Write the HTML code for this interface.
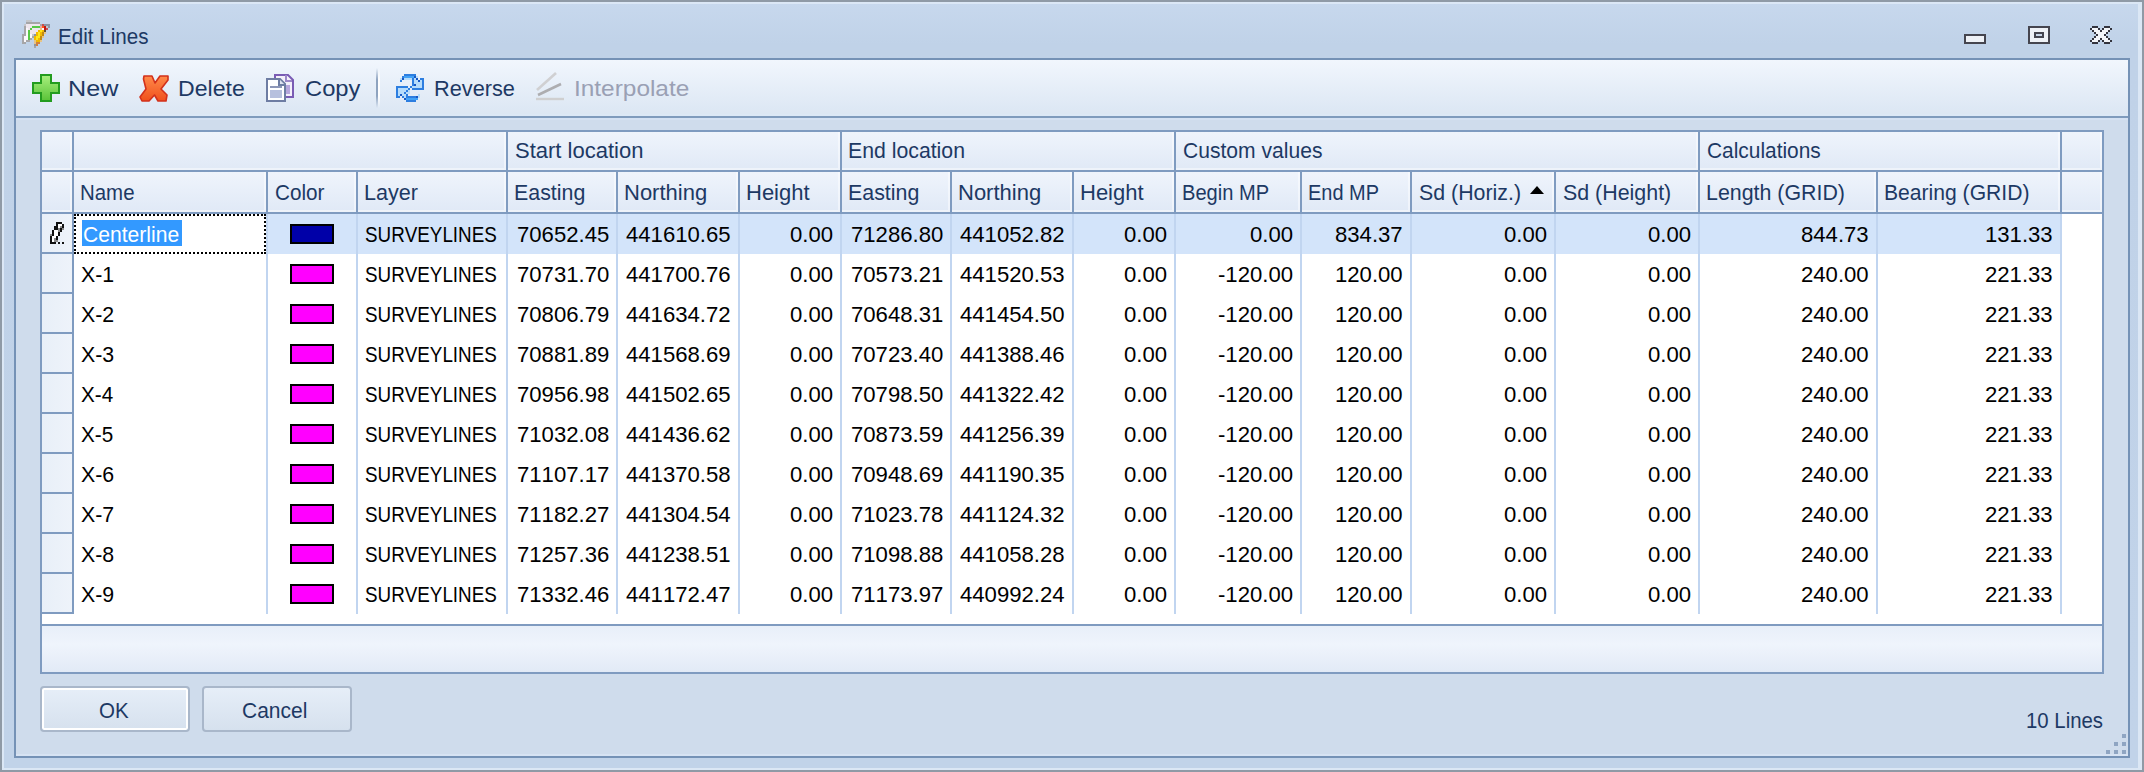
<!DOCTYPE html>
<html><head><meta charset="utf-8"><title>Edit Lines</title>
<style>
html,body{margin:0;padding:0;width:2144px;height:772px;overflow:hidden;background:#8f9aa6}
body>div,body>svg{position:absolute}
.t{font-family:"Liberation Sans",sans-serif;font-size:22.0px;line-height:40px;height:40px;white-space:pre;font-kerning:none;transform-origin:0 0}
</style></head><body>
<div style="left:0px;top:0px;width:2144px;height:772px;background:#8f9aa6;"></div>
<div style="left:2px;top:2px;width:2140px;height:768px;background:#dbe7f5;"></div>
<div style="left:4px;top:4px;width:2134px;height:764px;background:linear-gradient(#c7d8ed,#c0d2e8 40px,#c1d3e9);"></div>
<div class="t" style="left:58.13px;top:16.78px;color:#1d3964;transform:scaleX(0.9362);">Edit Lines</div>
<svg style="position:absolute;left:1960px;top:22px" width="160" height="28" viewBox="1960 22 160 28">
<rect x="1965" y="35" width="20" height="8" fill="#eef1f6" stroke="#45454f" stroke-width="2"/>
<rect x="2029" y="27" width="20" height="16" fill="#eef1f6" stroke="#45454f" stroke-width="2"/>
<rect x="2035" y="33" width="8" height="4" fill="#c9d6e8" stroke="#45454f" stroke-width="2"/>
</svg>
<svg style="position:absolute;left:0;top:0" width="2144" height="60"><rect x="2092" y="26" width="2" height="2" fill="#34343e"/><rect x="2094" y="26" width="2" height="2" fill="#34343e"/><rect x="2096" y="26" width="2" height="2" fill="#34343e"/><rect x="2104" y="26" width="2" height="2" fill="#34343e"/><rect x="2106" y="26" width="2" height="2" fill="#34343e"/><rect x="2108" y="26" width="2" height="2" fill="#34343e"/><rect x="2090" y="28" width="2" height="2" fill="#34343e"/><rect x="2092" y="28" width="2" height="2" fill="#f3f5f9"/><rect x="2094" y="28" width="2" height="2" fill="#f3f5f9"/><rect x="2096" y="28" width="2" height="2" fill="#f3f5f9"/><rect x="2098" y="28" width="2" height="2" fill="#34343e"/><rect x="2102" y="28" width="2" height="2" fill="#34343e"/><rect x="2104" y="28" width="2" height="2" fill="#f3f5f9"/><rect x="2106" y="28" width="2" height="2" fill="#f3f5f9"/><rect x="2108" y="28" width="2" height="2" fill="#f3f5f9"/><rect x="2110" y="28" width="2" height="2" fill="#34343e"/><rect x="2092" y="30" width="2" height="2" fill="#34343e"/><rect x="2094" y="30" width="2" height="2" fill="#f3f5f9"/><rect x="2096" y="30" width="2" height="2" fill="#f3f5f9"/><rect x="2098" y="30" width="2" height="2" fill="#f3f5f9"/><rect x="2100" y="30" width="2" height="2" fill="#34343e"/><rect x="2102" y="30" width="2" height="2" fill="#f3f5f9"/><rect x="2104" y="30" width="2" height="2" fill="#f3f5f9"/><rect x="2106" y="30" width="2" height="2" fill="#f3f5f9"/><rect x="2108" y="30" width="2" height="2" fill="#34343e"/><rect x="2094" y="32" width="2" height="2" fill="#34343e"/><rect x="2096" y="32" width="2" height="2" fill="#f3f5f9"/><rect x="2098" y="32" width="2" height="2" fill="#f3f5f9"/><rect x="2100" y="32" width="2" height="2" fill="#f3f5f9"/><rect x="2102" y="32" width="2" height="2" fill="#f3f5f9"/><rect x="2104" y="32" width="2" height="2" fill="#f3f5f9"/><rect x="2106" y="32" width="2" height="2" fill="#34343e"/><rect x="2096" y="34" width="2" height="2" fill="#34343e"/><rect x="2098" y="34" width="2" height="2" fill="#f3f5f9"/><rect x="2100" y="34" width="2" height="2" fill="#f3f5f9"/><rect x="2102" y="34" width="2" height="2" fill="#f3f5f9"/><rect x="2104" y="34" width="2" height="2" fill="#34343e"/><rect x="2094" y="36" width="2" height="2" fill="#34343e"/><rect x="2096" y="36" width="2" height="2" fill="#f3f5f9"/><rect x="2098" y="36" width="2" height="2" fill="#f3f5f9"/><rect x="2100" y="36" width="2" height="2" fill="#f3f5f9"/><rect x="2102" y="36" width="2" height="2" fill="#f3f5f9"/><rect x="2104" y="36" width="2" height="2" fill="#f3f5f9"/><rect x="2106" y="36" width="2" height="2" fill="#34343e"/><rect x="2092" y="38" width="2" height="2" fill="#34343e"/><rect x="2094" y="38" width="2" height="2" fill="#f3f5f9"/><rect x="2096" y="38" width="2" height="2" fill="#f3f5f9"/><rect x="2098" y="38" width="2" height="2" fill="#f3f5f9"/><rect x="2100" y="38" width="2" height="2" fill="#34343e"/><rect x="2102" y="38" width="2" height="2" fill="#f3f5f9"/><rect x="2104" y="38" width="2" height="2" fill="#f3f5f9"/><rect x="2106" y="38" width="2" height="2" fill="#f3f5f9"/><rect x="2108" y="38" width="2" height="2" fill="#34343e"/><rect x="2090" y="40" width="2" height="2" fill="#34343e"/><rect x="2092" y="40" width="2" height="2" fill="#f3f5f9"/><rect x="2094" y="40" width="2" height="2" fill="#f3f5f9"/><rect x="2096" y="40" width="2" height="2" fill="#f3f5f9"/><rect x="2098" y="40" width="2" height="2" fill="#34343e"/><rect x="2102" y="40" width="2" height="2" fill="#34343e"/><rect x="2104" y="40" width="2" height="2" fill="#f3f5f9"/><rect x="2106" y="40" width="2" height="2" fill="#f3f5f9"/><rect x="2108" y="40" width="2" height="2" fill="#f3f5f9"/><rect x="2110" y="40" width="2" height="2" fill="#34343e"/><rect x="2092" y="42" width="2" height="2" fill="#34343e"/><rect x="2094" y="42" width="2" height="2" fill="#34343e"/><rect x="2096" y="42" width="2" height="2" fill="#34343e"/><rect x="2104" y="42" width="2" height="2" fill="#34343e"/><rect x="2106" y="42" width="2" height="2" fill="#34343e"/><rect x="2108" y="42" width="2" height="2" fill="#34343e"/></svg>
<svg style="position:absolute;left:0;top:0" width="60" height="60"><rect x="26" y="20" width="2" height="2" fill="#c4c6ca"/><rect x="28" y="20" width="2" height="2" fill="#c4c6ca"/><rect x="30" y="20" width="2" height="2" fill="#c4c6ca"/><rect x="26" y="22" width="2" height="2" fill="#a6a6a8"/><rect x="28" y="22" width="2" height="2" fill="#a6a6a8"/><rect x="30" y="22" width="2" height="2" fill="#a6a6a8"/><rect x="32" y="22" width="2" height="2" fill="#a6a6a8"/><rect x="34" y="22" width="2" height="2" fill="#a6a6a8"/><rect x="36" y="22" width="2" height="2" fill="#a6a6a8"/><rect x="38" y="22" width="2" height="2" fill="#a6a6a8"/><rect x="24" y="24" width="2" height="2" fill="#c4c6ca"/><rect x="26" y="24" width="2" height="2" fill="#efe6ee"/><rect x="28" y="24" width="2" height="2" fill="#efe6ee"/><rect x="30" y="24" width="2" height="2" fill="#efe6ee"/><rect x="32" y="24" width="2" height="2" fill="#efe6ee"/><rect x="34" y="24" width="2" height="2" fill="#efe6ee"/><rect x="36" y="24" width="2" height="2" fill="#efe6ee"/><rect x="38" y="24" width="2" height="2" fill="#efe6ee"/><rect x="40" y="24" width="2" height="2" fill="#a6a6a8"/><rect x="42" y="24" width="2" height="2" fill="#c65050"/><rect x="44" y="24" width="2" height="2" fill="#8a96a6"/><rect x="46" y="24" width="2" height="2" fill="#8a96a6"/><rect x="48" y="24" width="2" height="2" fill="#8a96a6"/><rect x="24" y="26" width="2" height="2" fill="#a6a6a8"/><rect x="26" y="26" width="2" height="2" fill="#efe6ee"/><rect x="28" y="26" width="2" height="2" fill="#efe6ee"/><rect x="30" y="26" width="2" height="2" fill="#efe6ee"/><rect x="32" y="26" width="2" height="2" fill="#58c846"/><rect x="34" y="26" width="2" height="2" fill="#58c846"/><rect x="36" y="26" width="2" height="2" fill="#58c846"/><rect x="38" y="26" width="2" height="2" fill="#58c846"/><rect x="40" y="26" width="2" height="2" fill="#f2a2a0"/><rect x="42" y="26" width="2" height="2" fill="#ff5a14"/><rect x="44" y="26" width="2" height="2" fill="#c01616"/><rect x="46" y="26" width="2" height="2" fill="#c4c6ca"/><rect x="48" y="26" width="2" height="2" fill="#8a96a6"/><rect x="24" y="28" width="2" height="2" fill="#a6a6a8"/><rect x="26" y="28" width="2" height="2" fill="#fbf8fb"/><rect x="28" y="28" width="2" height="2" fill="#efe6ee"/><rect x="30" y="28" width="2" height="2" fill="#58c846"/><rect x="32" y="28" width="2" height="2" fill="#efe6ee"/><rect x="34" y="28" width="2" height="2" fill="#efe6ee"/><rect x="36" y="28" width="2" height="2" fill="#efe6ee"/><rect x="38" y="28" width="2" height="2" fill="#efe6ee"/><rect x="40" y="28" width="2" height="2" fill="#e8c484"/><rect x="42" y="28" width="2" height="2" fill="#fbf8fb"/><rect x="44" y="28" width="2" height="2" fill="#c01616"/><rect x="46" y="28" width="2" height="2" fill="#c65050"/><rect x="24" y="30" width="2" height="2" fill="#a6a6a8"/><rect x="26" y="30" width="2" height="2" fill="#fbf8fb"/><rect x="28" y="30" width="2" height="2" fill="#58c846"/><rect x="30" y="30" width="2" height="2" fill="#efe6ee"/><rect x="32" y="30" width="2" height="2" fill="#efe6ee"/><rect x="34" y="30" width="2" height="2" fill="#efe6ee"/><rect x="36" y="30" width="2" height="2" fill="#efe6ee"/><rect x="38" y="30" width="2" height="2" fill="#f2b800"/><rect x="40" y="30" width="2" height="2" fill="#ffe81a"/><rect x="42" y="30" width="2" height="2" fill="#f2b800"/><rect x="44" y="30" width="2" height="2" fill="#605030"/><rect x="24" y="32" width="2" height="2" fill="#a6a6a8"/><rect x="26" y="32" width="2" height="2" fill="#fbf8fb"/><rect x="28" y="32" width="2" height="2" fill="#58c846"/><rect x="30" y="32" width="2" height="2" fill="#efe6ee"/><rect x="32" y="32" width="2" height="2" fill="#efe6ee"/><rect x="34" y="32" width="2" height="2" fill="#efe6ee"/><rect x="36" y="32" width="2" height="2" fill="#f2b800"/><rect x="38" y="32" width="2" height="2" fill="#ffe81a"/><rect x="40" y="32" width="2" height="2" fill="#f2b800"/><rect x="42" y="32" width="2" height="2" fill="#c08a12"/><rect x="44" y="32" width="2" height="2" fill="#e8c484"/><rect x="22" y="34" width="2" height="2" fill="#a6a6a8"/><rect x="24" y="34" width="2" height="2" fill="#a6a6a8"/><rect x="26" y="34" width="2" height="2" fill="#fbf8fb"/><rect x="28" y="34" width="2" height="2" fill="#58c846"/><rect x="30" y="34" width="2" height="2" fill="#fbf8fb"/><rect x="32" y="34" width="2" height="2" fill="#c4c6ca"/><rect x="34" y="34" width="2" height="2" fill="#8a96a6"/><rect x="36" y="34" width="2" height="2" fill="#f2b800"/><rect x="38" y="34" width="2" height="2" fill="#ffe81a"/><rect x="40" y="34" width="2" height="2" fill="#f2b800"/><rect x="42" y="34" width="2" height="2" fill="#c08a12"/><rect x="22" y="36" width="2" height="2" fill="#a6a6a8"/><rect x="24" y="36" width="2" height="2" fill="#fbf8fb"/><rect x="26" y="36" width="2" height="2" fill="#fbf8fb"/><rect x="28" y="36" width="2" height="2" fill="#58c846"/><rect x="30" y="36" width="2" height="2" fill="#fbf8fb"/><rect x="32" y="36" width="2" height="2" fill="#a6a6a8"/><rect x="34" y="36" width="2" height="2" fill="#f2b800"/><rect x="36" y="36" width="2" height="2" fill="#ffe81a"/><rect x="38" y="36" width="2" height="2" fill="#ffe81a"/><rect x="40" y="36" width="2" height="2" fill="#c08a12"/><rect x="42" y="36" width="2" height="2" fill="#e8c484"/><rect x="22" y="38" width="2" height="2" fill="#a6a6a8"/><rect x="24" y="38" width="2" height="2" fill="#fbf8fb"/><rect x="26" y="38" width="2" height="2" fill="#fbf8fb"/><rect x="28" y="38" width="2" height="2" fill="#58c846"/><rect x="30" y="38" width="2" height="2" fill="#a6a6a8"/><rect x="34" y="38" width="2" height="2" fill="#f2b800"/><rect x="36" y="38" width="2" height="2" fill="#ffe81a"/><rect x="38" y="38" width="2" height="2" fill="#f2b800"/><rect x="40" y="38" width="2" height="2" fill="#c08a12"/><rect x="22" y="40" width="2" height="2" fill="#a6a6a8"/><rect x="24" y="40" width="2" height="2" fill="#fbf8fb"/><rect x="26" y="40" width="2" height="2" fill="#a6a6a8"/><rect x="28" y="40" width="2" height="2" fill="#a6a6a8"/><rect x="34" y="40" width="2" height="2" fill="#e8c484"/><rect x="36" y="40" width="2" height="2" fill="#f2b800"/><rect x="38" y="40" width="2" height="2" fill="#f2b800"/><rect x="40" y="40" width="2" height="2" fill="#e8c484"/><rect x="22" y="42" width="2" height="2" fill="#a6a6a8"/><rect x="24" y="42" width="2" height="2" fill="#a6a6a8"/><rect x="34" y="42" width="2" height="2" fill="#e8c484"/><rect x="36" y="42" width="2" height="2" fill="#d08040"/><rect x="38" y="42" width="2" height="2" fill="#d08040"/><rect x="34" y="44" width="2" height="2" fill="#8a96a6"/><rect x="36" y="44" width="2" height="2" fill="#d08040"/><rect x="34" y="46" width="2" height="2" fill="#a6a6a8"/></svg>
<div style="left:14px;top:58px;width:2116px;height:700px;background:#7592b6;"></div>
<div style="left:16px;top:60px;width:2112px;height:56px;background:linear-gradient(#f1f6fd,#dbe6f3);"></div>
<div style="left:16px;top:114px;width:2112px;height:2px;background:#dce8f6;"></div>
<div style="left:16px;top:116px;width:2112px;height:2px;background:#7f9bbd;"></div>
<div style="left:16px;top:118px;width:2112px;height:638px;background:#cfdcec;"></div>
<div style="left:16px;top:118px;width:2112px;height:2px;background:#d4e1f3;"></div>
<div style="left:16px;top:754px;width:2112px;height:2px;background:#d7e3f3;"></div>
<div class="t" style="left:67.71px;top:68.78px;color:#1d3964;transform:scaleX(1.1429);">New</div>
<div class="t" style="left:177.90px;top:68.78px;color:#1d3964;transform:scaleX(1.0492);">Delete</div>
<div class="t" style="left:304.92px;top:68.78px;color:#1d3964;transform:scaleX(1.0800);">Copy</div>
<div class="t" style="left:434.03px;top:68.78px;color:#1d3964;transform:scaleX(0.9873);">Reverse</div>
<div class="t" style="left:573.78px;top:68.78px;color:#9aa0b4;transform:scaleX(1.1089);">Interpolate</div>
<div style="left:376px;top:68px;width:2px;height:40px;background:linear-gradient(rgba(140,160,190,0),#8ea3bf 30%,#8ea3bf 70%,rgba(140,160,190,0));"></div>
<div style="left:378px;top:68px;width:2px;height:40px;background:linear-gradient(rgba(255,255,255,0),#ffffff 30%,#ffffff 70%,rgba(255,255,255,0));"></div>
<svg style="position:absolute;left:0;top:0" width="700" height="120"><rect x="404" y="74" width="2" height="2" fill="#2d7ee0"/><rect x="406" y="74" width="2" height="2" fill="#2d7ee0"/><rect x="408" y="74" width="2" height="2" fill="#2d7ee0"/><rect x="410" y="74" width="2" height="2" fill="#2d7ee0"/><rect x="412" y="74" width="2" height="2" fill="#2d7ee0"/><rect x="414" y="74" width="2" height="2" fill="#2d7ee0"/><rect x="402" y="76" width="2" height="2" fill="#2d7ee0"/><rect x="404" y="76" width="2" height="2" fill="#42a2f6"/><rect x="406" y="76" width="2" height="2" fill="#42a2f6"/><rect x="408" y="76" width="2" height="2" fill="#42a2f6"/><rect x="410" y="76" width="2" height="2" fill="#42a2f6"/><rect x="412" y="76" width="2" height="2" fill="#42a2f6"/><rect x="414" y="76" width="2" height="2" fill="#1858c4"/><rect x="416" y="76" width="2" height="2" fill="#b6dcfb"/><rect x="400" y="78" width="2" height="2" fill="#b6dcfb"/><rect x="402" y="78" width="2" height="2" fill="#1858c4"/><rect x="404" y="78" width="2" height="2" fill="#b6dcfb"/><rect x="406" y="78" width="2" height="2" fill="#b6dcfb"/><rect x="408" y="78" width="2" height="2" fill="#b6dcfb"/><rect x="410" y="78" width="2" height="2" fill="#b6dcfb"/><rect x="412" y="78" width="2" height="2" fill="#2d7ee0"/><rect x="414" y="78" width="2" height="2" fill="#b6dcfb"/><rect x="416" y="78" width="2" height="2" fill="#1858c4"/><rect x="420" y="78" width="2" height="2" fill="#2d7ee0"/><rect x="422" y="78" width="2" height="2" fill="#2d7ee0"/><rect x="400" y="80" width="2" height="2" fill="#2d7ee0"/><rect x="412" y="80" width="2" height="2" fill="#2d7ee0"/><rect x="414" y="80" width="2" height="2" fill="#b6dcfb"/><rect x="416" y="80" width="2" height="2" fill="#b6dcfb"/><rect x="418" y="80" width="2" height="2" fill="#1858c4"/><rect x="420" y="80" width="2" height="2" fill="#b6dcfb"/><rect x="422" y="80" width="2" height="2" fill="#2d7ee0"/><rect x="412" y="82" width="2" height="2" fill="#2d7ee0"/><rect x="414" y="82" width="2" height="2" fill="#b6dcfb"/><rect x="416" y="82" width="2" height="2" fill="#b6dcfb"/><rect x="418" y="82" width="2" height="2" fill="#b6dcfb"/><rect x="420" y="82" width="2" height="2" fill="#b6dcfb"/><rect x="422" y="82" width="2" height="2" fill="#2d7ee0"/><rect x="412" y="84" width="2" height="2" fill="#2d7ee0"/><rect x="414" y="84" width="2" height="2" fill="#1858c4"/><rect x="416" y="84" width="2" height="2" fill="#b6dcfb"/><rect x="418" y="84" width="2" height="2" fill="#b6dcfb"/><rect x="420" y="84" width="2" height="2" fill="#b6dcfb"/><rect x="422" y="84" width="2" height="2" fill="#2d7ee0"/><rect x="396" y="86" width="2" height="2" fill="#2d7ee0"/><rect x="398" y="86" width="2" height="2" fill="#2d7ee0"/><rect x="400" y="86" width="2" height="2" fill="#2d7ee0"/><rect x="402" y="86" width="2" height="2" fill="#2d7ee0"/><rect x="404" y="86" width="2" height="2" fill="#2d7ee0"/><rect x="406" y="86" width="2" height="2" fill="#2d7ee0"/><rect x="410" y="86" width="2" height="2" fill="#2d7ee0"/><rect x="412" y="86" width="2" height="2" fill="#b6dcfb"/><rect x="414" y="86" width="2" height="2" fill="#b6dcfb"/><rect x="416" y="86" width="2" height="2" fill="#b6dcfb"/><rect x="418" y="86" width="2" height="2" fill="#b6dcfb"/><rect x="420" y="86" width="2" height="2" fill="#b6dcfb"/><rect x="422" y="86" width="2" height="2" fill="#2d7ee0"/><rect x="396" y="88" width="2" height="2" fill="#2d7ee0"/><rect x="398" y="88" width="2" height="2" fill="#b6dcfb"/><rect x="400" y="88" width="2" height="2" fill="#b6dcfb"/><rect x="402" y="88" width="2" height="2" fill="#b6dcfb"/><rect x="404" y="88" width="2" height="2" fill="#b6dcfb"/><rect x="406" y="88" width="2" height="2" fill="#b6dcfb"/><rect x="408" y="88" width="2" height="2" fill="#2d7ee0"/><rect x="412" y="88" width="2" height="2" fill="#2d7ee0"/><rect x="414" y="88" width="2" height="2" fill="#2d7ee0"/><rect x="416" y="88" width="2" height="2" fill="#2d7ee0"/><rect x="418" y="88" width="2" height="2" fill="#2d7ee0"/><rect x="420" y="88" width="2" height="2" fill="#2d7ee0"/><rect x="422" y="88" width="2" height="2" fill="#2d7ee0"/><rect x="396" y="90" width="2" height="2" fill="#2d7ee0"/><rect x="398" y="90" width="2" height="2" fill="#b6dcfb"/><rect x="400" y="90" width="2" height="2" fill="#b6dcfb"/><rect x="402" y="90" width="2" height="2" fill="#b6dcfb"/><rect x="404" y="90" width="2" height="2" fill="#b6dcfb"/><rect x="406" y="90" width="2" height="2" fill="#2d7ee0"/><rect x="408" y="90" width="2" height="2" fill="#b6dcfb"/><rect x="396" y="92" width="2" height="2" fill="#2d7ee0"/><rect x="398" y="92" width="2" height="2" fill="#b6dcfb"/><rect x="400" y="92" width="2" height="2" fill="#b6dcfb"/><rect x="402" y="92" width="2" height="2" fill="#b6dcfb"/><rect x="404" y="92" width="2" height="2" fill="#2d7ee0"/><rect x="406" y="92" width="2" height="2" fill="#b6dcfb"/><rect x="408" y="92" width="2" height="2" fill="#b6dcfb"/><rect x="396" y="94" width="2" height="2" fill="#2d7ee0"/><rect x="398" y="94" width="2" height="2" fill="#b6dcfb"/><rect x="400" y="94" width="2" height="2" fill="#1858c4"/><rect x="402" y="94" width="2" height="2" fill="#b6dcfb"/><rect x="404" y="94" width="2" height="2" fill="#b6dcfb"/><rect x="406" y="94" width="2" height="2" fill="#2d7ee0"/><rect x="418" y="94" width="2" height="2" fill="#b6dcfb"/><rect x="396" y="96" width="2" height="2" fill="#2d7ee0"/><rect x="398" y="96" width="2" height="2" fill="#2d7ee0"/><rect x="402" y="96" width="2" height="2" fill="#2d7ee0"/><rect x="404" y="96" width="2" height="2" fill="#b6dcfb"/><rect x="406" y="96" width="2" height="2" fill="#2d7ee0"/><rect x="408" y="96" width="2" height="2" fill="#2d7ee0"/><rect x="410" y="96" width="2" height="2" fill="#2d7ee0"/><rect x="412" y="96" width="2" height="2" fill="#2d7ee0"/><rect x="414" y="96" width="2" height="2" fill="#2d7ee0"/><rect x="416" y="96" width="2" height="2" fill="#1858c4"/><rect x="418" y="96" width="2" height="2" fill="#b6dcfb"/><rect x="404" y="98" width="2" height="2" fill="#1858c4"/><rect x="406" y="98" width="2" height="2" fill="#42a2f6"/><rect x="408" y="98" width="2" height="2" fill="#42a2f6"/><rect x="410" y="98" width="2" height="2" fill="#42a2f6"/><rect x="412" y="98" width="2" height="2" fill="#42a2f6"/><rect x="414" y="98" width="2" height="2" fill="#42a2f6"/><rect x="416" y="98" width="2" height="2" fill="#42a2f6"/><rect x="406" y="100" width="2" height="2" fill="#2d7ee0"/><rect x="408" y="100" width="2" height="2" fill="#2d7ee0"/><rect x="410" y="100" width="2" height="2" fill="#2d7ee0"/><rect x="412" y="100" width="2" height="2" fill="#2d7ee0"/><rect x="414" y="100" width="2" height="2" fill="#2d7ee0"/></svg>
<div style="left:40px;top:130px;width:2064px;height:544px;background:#7f9bc0;"></div>
<div style="left:42px;top:214px;width:2060px;height:410px;background:#ffffff;"></div>
<div style="left:42px;top:132px;width:30px;height:38px;background:linear-gradient(#eff4fc,#e0e9f6);box-shadow:inset -2px -2px 0 rgba(255,255,255,0.45)"></div>
<div style="left:74px;top:132px;width:432px;height:38px;background:linear-gradient(#eff4fc,#e0e9f6);box-shadow:inset -2px -2px 0 rgba(255,255,255,0.45)"></div>
<div style="left:508px;top:132px;width:332px;height:38px;background:linear-gradient(#eff4fc,#e0e9f6);box-shadow:inset -2px -2px 0 rgba(255,255,255,0.45)"></div>
<div style="left:842px;top:132px;width:332px;height:38px;background:linear-gradient(#eff4fc,#e0e9f6);box-shadow:inset -2px -2px 0 rgba(255,255,255,0.45)"></div>
<div style="left:1176px;top:132px;width:522px;height:38px;background:linear-gradient(#eff4fc,#e0e9f6);box-shadow:inset -2px -2px 0 rgba(255,255,255,0.45)"></div>
<div style="left:1700px;top:132px;width:360px;height:38px;background:linear-gradient(#eff4fc,#e0e9f6);box-shadow:inset -2px -2px 0 rgba(255,255,255,0.45)"></div>
<div style="left:2062px;top:132px;width:40px;height:38px;background:linear-gradient(#eff4fc,#e0e9f6);box-shadow:inset -2px -2px 0 rgba(255,255,255,0.45)"></div>
<div style="left:42px;top:172px;width:30px;height:40px;background:linear-gradient(#eff4fc,#e0e9f6);box-shadow:inset -2px -2px 0 rgba(255,255,255,0.45)"></div>
<div style="left:74px;top:172px;width:192px;height:40px;background:linear-gradient(#eff4fc,#e0e9f6);box-shadow:inset -2px -2px 0 rgba(255,255,255,0.45)"></div>
<div style="left:268px;top:172px;width:88px;height:40px;background:linear-gradient(#eff4fc,#e0e9f6);box-shadow:inset -2px -2px 0 rgba(255,255,255,0.45)"></div>
<div style="left:358px;top:172px;width:148px;height:40px;background:linear-gradient(#eff4fc,#e0e9f6);box-shadow:inset -2px -2px 0 rgba(255,255,255,0.45)"></div>
<div style="left:508px;top:172px;width:108px;height:40px;background:linear-gradient(#eff4fc,#e0e9f6);box-shadow:inset -2px -2px 0 rgba(255,255,255,0.45)"></div>
<div style="left:618px;top:172px;width:120px;height:40px;background:linear-gradient(#eff4fc,#e0e9f6);box-shadow:inset -2px -2px 0 rgba(255,255,255,0.45)"></div>
<div style="left:740px;top:172px;width:100px;height:40px;background:linear-gradient(#eff4fc,#e0e9f6);box-shadow:inset -2px -2px 0 rgba(255,255,255,0.45)"></div>
<div style="left:842px;top:172px;width:108px;height:40px;background:linear-gradient(#eff4fc,#e0e9f6);box-shadow:inset -2px -2px 0 rgba(255,255,255,0.45)"></div>
<div style="left:952px;top:172px;width:120px;height:40px;background:linear-gradient(#eff4fc,#e0e9f6);box-shadow:inset -2px -2px 0 rgba(255,255,255,0.45)"></div>
<div style="left:1074px;top:172px;width:100px;height:40px;background:linear-gradient(#eff4fc,#e0e9f6);box-shadow:inset -2px -2px 0 rgba(255,255,255,0.45)"></div>
<div style="left:1176px;top:172px;width:124px;height:40px;background:linear-gradient(#eff4fc,#e0e9f6);box-shadow:inset -2px -2px 0 rgba(255,255,255,0.45)"></div>
<div style="left:1302px;top:172px;width:108px;height:40px;background:linear-gradient(#eff4fc,#e0e9f6);box-shadow:inset -2px -2px 0 rgba(255,255,255,0.45)"></div>
<div style="left:1412px;top:172px;width:142px;height:40px;background:linear-gradient(#eff4fc,#e0e9f6);box-shadow:inset -2px -2px 0 rgba(255,255,255,0.45)"></div>
<div style="left:1556px;top:172px;width:142px;height:40px;background:linear-gradient(#eff4fc,#e0e9f6);box-shadow:inset -2px -2px 0 rgba(255,255,255,0.45)"></div>
<div style="left:1700px;top:172px;width:176px;height:40px;background:linear-gradient(#eff4fc,#e0e9f6);box-shadow:inset -2px -2px 0 rgba(255,255,255,0.45)"></div>
<div style="left:1878px;top:172px;width:182px;height:40px;background:linear-gradient(#eff4fc,#e0e9f6);box-shadow:inset -2px -2px 0 rgba(255,255,255,0.45)"></div>
<div style="left:2062px;top:172px;width:40px;height:40px;background:linear-gradient(#eff4fc,#e0e9f6);box-shadow:inset -2px -2px 0 rgba(255,255,255,0.45)"></div>
<div style="left:42px;top:214px;width:30px;height:38px;background:linear-gradient(90deg,#e8eff8,#eef3fa);"></div>
<div style="left:42px;top:252px;width:32px;height:2px;background:#7f9bc0;"></div>
<div style="left:42px;top:254px;width:30px;height:38px;background:linear-gradient(90deg,#e8eff8,#eef3fa);"></div>
<div style="left:42px;top:292px;width:32px;height:2px;background:#7f9bc0;"></div>
<div style="left:42px;top:294px;width:30px;height:38px;background:linear-gradient(90deg,#e8eff8,#eef3fa);"></div>
<div style="left:42px;top:332px;width:32px;height:2px;background:#7f9bc0;"></div>
<div style="left:42px;top:334px;width:30px;height:38px;background:linear-gradient(90deg,#e8eff8,#eef3fa);"></div>
<div style="left:42px;top:372px;width:32px;height:2px;background:#7f9bc0;"></div>
<div style="left:42px;top:374px;width:30px;height:38px;background:linear-gradient(90deg,#e8eff8,#eef3fa);"></div>
<div style="left:42px;top:412px;width:32px;height:2px;background:#7f9bc0;"></div>
<div style="left:42px;top:414px;width:30px;height:38px;background:linear-gradient(90deg,#e8eff8,#eef3fa);"></div>
<div style="left:42px;top:452px;width:32px;height:2px;background:#7f9bc0;"></div>
<div style="left:42px;top:454px;width:30px;height:38px;background:linear-gradient(90deg,#e8eff8,#eef3fa);"></div>
<div style="left:42px;top:492px;width:32px;height:2px;background:#7f9bc0;"></div>
<div style="left:42px;top:494px;width:30px;height:38px;background:linear-gradient(90deg,#e8eff8,#eef3fa);"></div>
<div style="left:42px;top:532px;width:32px;height:2px;background:#7f9bc0;"></div>
<div style="left:42px;top:534px;width:30px;height:38px;background:linear-gradient(90deg,#e8eff8,#eef3fa);"></div>
<div style="left:42px;top:572px;width:32px;height:2px;background:#7f9bc0;"></div>
<div style="left:42px;top:574px;width:30px;height:38px;background:linear-gradient(90deg,#e8eff8,#eef3fa);"></div>
<div style="left:42px;top:612px;width:32px;height:2px;background:#7f9bc0;"></div>
<div style="left:72px;top:214px;width:2px;height:400px;background:#7f9bc0;"></div>
<div style="left:268px;top:214px;width:1792px;height:40px;background:#d3e4fa;"></div>
<div style="left:266px;top:214px;width:2px;height:400px;background:#c1d5f0;"></div>
<div style="left:356px;top:214px;width:2px;height:400px;background:#c1d5f0;"></div>
<div style="left:506px;top:214px;width:2px;height:400px;background:#c1d5f0;"></div>
<div style="left:616px;top:214px;width:2px;height:400px;background:#c1d5f0;"></div>
<div style="left:738px;top:214px;width:2px;height:400px;background:#c1d5f0;"></div>
<div style="left:840px;top:214px;width:2px;height:400px;background:#c1d5f0;"></div>
<div style="left:950px;top:214px;width:2px;height:400px;background:#c1d5f0;"></div>
<div style="left:1072px;top:214px;width:2px;height:400px;background:#c1d5f0;"></div>
<div style="left:1174px;top:214px;width:2px;height:400px;background:#c1d5f0;"></div>
<div style="left:1300px;top:214px;width:2px;height:400px;background:#c1d5f0;"></div>
<div style="left:1410px;top:214px;width:2px;height:400px;background:#c1d5f0;"></div>
<div style="left:1554px;top:214px;width:2px;height:400px;background:#c1d5f0;"></div>
<div style="left:1698px;top:214px;width:2px;height:400px;background:#c1d5f0;"></div>
<div style="left:1876px;top:214px;width:2px;height:400px;background:#c1d5f0;"></div>
<div style="left:2060px;top:214px;width:2px;height:400px;background:#c1d5f0;"></div>
<div style="left:42px;top:624px;width:2060px;height:2px;background:#7f9bc0;"></div>
<div style="left:42px;top:626px;width:2060px;height:46px;background:linear-gradient(#e8eff9,#eff4fc 40%,#e2eaf6);"></div>
<div class="t" style="left:515.00px;top:130.78px;color:#1d3964;transform:scaleX(1.0000);">Start location</div>
<div class="t" style="left:848.07px;top:130.78px;color:#1d3964;transform:scaleX(0.9661);">End location</div>
<div class="t" style="left:1183.04px;top:130.78px;color:#1d3964;transform:scaleX(0.9583);">Custom values</div>
<div class="t" style="left:1707.05px;top:130.78px;color:#1d3964;transform:scaleX(0.9492);">Calculations</div>
<div class="t" style="left:80.14px;top:172.78px;color:#1d3964;transform:scaleX(0.9286);">Name</div>
<div class="t" style="left:275.06px;top:172.78px;color:#1d3964;transform:scaleX(0.9412);">Color</div>
<div class="t" style="left:364.04px;top:172.78px;color:#1d3964;transform:scaleX(0.9811);">Layer</div>
<div class="t" style="left:514.06px;top:172.78px;color:#1d3964;transform:scaleX(0.9714);">Easting</div>
<div class="t" style="left:624.00px;top:172.78px;color:#1d3964;transform:scaleX(1.0000);">Northing</div>
<div class="t" style="left:746.00px;top:172.78px;color:#1d3964;transform:scaleX(1.0000);">Height</div>
<div class="t" style="left:848.06px;top:172.78px;color:#1d3964;transform:scaleX(0.9714);">Easting</div>
<div class="t" style="left:958.00px;top:172.78px;color:#1d3964;transform:scaleX(1.0000);">Northing</div>
<div class="t" style="left:1080.00px;top:172.78px;color:#1d3964;transform:scaleX(1.0000);">Height</div>
<div class="t" style="left:1182.17px;top:172.78px;color:#1d3964;transform:scaleX(0.9130);">Begin MP</div>
<div class="t" style="left:1308.19px;top:172.78px;color:#1d3964;transform:scaleX(0.9067);">End MP</div>
<div class="t" style="left:1419.03px;top:172.78px;color:#1d3964;transform:scaleX(0.9709);">Sd (Horiz.)</div>
<div class="t" style="left:1563.03px;top:172.78px;color:#1d3964;transform:scaleX(0.9725);">Sd (Height)</div>
<div class="t" style="left:1706.06px;top:172.78px;color:#1d3964;transform:scaleX(0.9714);">Length (GRID)</div>
<div class="t" style="left:1884.08px;top:172.78px;color:#1d3964;transform:scaleX(0.9595);">Bearing (GRID)</div>
<svg style="position:absolute;left:1530px;top:186px" width="14" height="8"><path d="M7 0L14 8H0z" fill="#000"/></svg>
<div style="left:290px;top:224px;width:44px;height:20px;background:#000;"></div>
<div style="left:292px;top:226px;width:40px;height:16px;background:#0000a8;"></div>
<div style="left:74px;top:214px;width:192px;height:40px;background:#fff;"></div>
<div style="left:74px;top:214px;width:192px;height:40px;box-sizing:border-box;border:2px dotted #000"></div>
<div style="left:82px;top:220px;width:100px;height:26px;background:#3399ff;"></div>
<div class="t" style="left:83.04px;top:214.78px;color:#fff;transform:scaleX(0.9592);">Centerline</div>
<div class="t" style="left:365.14px;top:214.78px;color:#000;transform:scaleX(0.8553);">SURVEYLINES</div>
<div class="t" style="left:516.76px;top:214.78px;color:#000;transform:scaleX(1.0054)">70652.45</div>
<div class="t" style="left:626.46px;top:214.78px;color:#000;transform:scaleX(1.0054)">441610.65</div>
<div class="t" style="left:789.96px;top:214.78px;color:#000;transform:scaleX(1.0054)">0.00</div>
<div class="t" style="left:850.76px;top:214.78px;color:#000;transform:scaleX(1.0054)">71286.80</div>
<div class="t" style="left:960.46px;top:214.78px;color:#000;transform:scaleX(1.0054)">441052.82</div>
<div class="t" style="left:1123.96px;top:214.78px;color:#000;transform:scaleX(1.0054)">0.00</div>
<div class="t" style="left:1249.96px;top:214.78px;color:#000;transform:scaleX(1.0054)">0.00</div>
<div class="t" style="left:1335.36px;top:214.78px;color:#000;transform:scaleX(1.0054)">834.37</div>
<div class="t" style="left:1503.96px;top:214.78px;color:#000;transform:scaleX(1.0054)">0.00</div>
<div class="t" style="left:1647.96px;top:214.78px;color:#000;transform:scaleX(1.0054)">0.00</div>
<div class="t" style="left:1801.36px;top:214.78px;color:#000;transform:scaleX(1.0054)">844.73</div>
<div class="t" style="left:1985.36px;top:214.78px;color:#000;transform:scaleX(1.0054)">131.33</div>
<div style="left:290px;top:264px;width:44px;height:20px;background:#000;"></div>
<div style="left:292px;top:266px;width:40px;height:16px;background:#ff00ff;"></div>
<div class="t" style="left:81.03px;top:254.78px;color:#000;transform:scaleX(0.9688);">X-1</div>
<div class="t" style="left:365.14px;top:254.78px;color:#000;transform:scaleX(0.8553);">SURVEYLINES</div>
<div class="t" style="left:516.76px;top:254.78px;color:#000;transform:scaleX(1.0054)">70731.70</div>
<div class="t" style="left:626.46px;top:254.78px;color:#000;transform:scaleX(1.0054)">441700.76</div>
<div class="t" style="left:789.96px;top:254.78px;color:#000;transform:scaleX(1.0054)">0.00</div>
<div class="t" style="left:850.76px;top:254.78px;color:#000;transform:scaleX(1.0054)">70573.21</div>
<div class="t" style="left:960.46px;top:254.78px;color:#000;transform:scaleX(1.0054)">441520.53</div>
<div class="t" style="left:1123.96px;top:254.78px;color:#000;transform:scaleX(1.0054)">0.00</div>
<div class="t" style="left:1217.99px;top:254.78px;color:#000;transform:scaleX(1.0054)">-120.00</div>
<div class="t" style="left:1335.36px;top:254.78px;color:#000;transform:scaleX(1.0054)">120.00</div>
<div class="t" style="left:1503.96px;top:254.78px;color:#000;transform:scaleX(1.0054)">0.00</div>
<div class="t" style="left:1647.96px;top:254.78px;color:#000;transform:scaleX(1.0054)">0.00</div>
<div class="t" style="left:1801.36px;top:254.78px;color:#000;transform:scaleX(1.0054)">240.00</div>
<div class="t" style="left:1985.36px;top:254.78px;color:#000;transform:scaleX(1.0054)">221.33</div>
<div style="left:290px;top:304px;width:44px;height:20px;background:#000;"></div>
<div style="left:292px;top:306px;width:40px;height:16px;background:#ff00ff;"></div>
<div class="t" style="left:81.03px;top:294.78px;color:#000;transform:scaleX(0.9688);">X-2</div>
<div class="t" style="left:365.14px;top:294.78px;color:#000;transform:scaleX(0.8553);">SURVEYLINES</div>
<div class="t" style="left:516.76px;top:294.78px;color:#000;transform:scaleX(1.0054)">70806.79</div>
<div class="t" style="left:626.46px;top:294.78px;color:#000;transform:scaleX(1.0054)">441634.72</div>
<div class="t" style="left:789.96px;top:294.78px;color:#000;transform:scaleX(1.0054)">0.00</div>
<div class="t" style="left:850.76px;top:294.78px;color:#000;transform:scaleX(1.0054)">70648.31</div>
<div class="t" style="left:960.46px;top:294.78px;color:#000;transform:scaleX(1.0054)">441454.50</div>
<div class="t" style="left:1123.96px;top:294.78px;color:#000;transform:scaleX(1.0054)">0.00</div>
<div class="t" style="left:1217.99px;top:294.78px;color:#000;transform:scaleX(1.0054)">-120.00</div>
<div class="t" style="left:1335.36px;top:294.78px;color:#000;transform:scaleX(1.0054)">120.00</div>
<div class="t" style="left:1503.96px;top:294.78px;color:#000;transform:scaleX(1.0054)">0.00</div>
<div class="t" style="left:1647.96px;top:294.78px;color:#000;transform:scaleX(1.0054)">0.00</div>
<div class="t" style="left:1801.36px;top:294.78px;color:#000;transform:scaleX(1.0054)">240.00</div>
<div class="t" style="left:1985.36px;top:294.78px;color:#000;transform:scaleX(1.0054)">221.33</div>
<div style="left:290px;top:344px;width:44px;height:20px;background:#000;"></div>
<div style="left:292px;top:346px;width:40px;height:16px;background:#ff00ff;"></div>
<div class="t" style="left:81.03px;top:334.78px;color:#000;transform:scaleX(0.9688);">X-3</div>
<div class="t" style="left:365.14px;top:334.78px;color:#000;transform:scaleX(0.8553);">SURVEYLINES</div>
<div class="t" style="left:516.76px;top:334.78px;color:#000;transform:scaleX(1.0054)">70881.89</div>
<div class="t" style="left:626.46px;top:334.78px;color:#000;transform:scaleX(1.0054)">441568.69</div>
<div class="t" style="left:789.96px;top:334.78px;color:#000;transform:scaleX(1.0054)">0.00</div>
<div class="t" style="left:850.76px;top:334.78px;color:#000;transform:scaleX(1.0054)">70723.40</div>
<div class="t" style="left:960.46px;top:334.78px;color:#000;transform:scaleX(1.0054)">441388.46</div>
<div class="t" style="left:1123.96px;top:334.78px;color:#000;transform:scaleX(1.0054)">0.00</div>
<div class="t" style="left:1217.99px;top:334.78px;color:#000;transform:scaleX(1.0054)">-120.00</div>
<div class="t" style="left:1335.36px;top:334.78px;color:#000;transform:scaleX(1.0054)">120.00</div>
<div class="t" style="left:1503.96px;top:334.78px;color:#000;transform:scaleX(1.0054)">0.00</div>
<div class="t" style="left:1647.96px;top:334.78px;color:#000;transform:scaleX(1.0054)">0.00</div>
<div class="t" style="left:1801.36px;top:334.78px;color:#000;transform:scaleX(1.0054)">240.00</div>
<div class="t" style="left:1985.36px;top:334.78px;color:#000;transform:scaleX(1.0054)">221.33</div>
<div style="left:290px;top:384px;width:44px;height:20px;background:#000;"></div>
<div style="left:292px;top:386px;width:40px;height:16px;background:#ff00ff;"></div>
<div class="t" style="left:81.06px;top:374.78px;color:#000;transform:scaleX(0.9394);">X-4</div>
<div class="t" style="left:365.14px;top:374.78px;color:#000;transform:scaleX(0.8553);">SURVEYLINES</div>
<div class="t" style="left:516.76px;top:374.78px;color:#000;transform:scaleX(1.0054)">70956.98</div>
<div class="t" style="left:626.46px;top:374.78px;color:#000;transform:scaleX(1.0054)">441502.65</div>
<div class="t" style="left:789.96px;top:374.78px;color:#000;transform:scaleX(1.0054)">0.00</div>
<div class="t" style="left:850.76px;top:374.78px;color:#000;transform:scaleX(1.0054)">70798.50</div>
<div class="t" style="left:960.46px;top:374.78px;color:#000;transform:scaleX(1.0054)">441322.42</div>
<div class="t" style="left:1123.96px;top:374.78px;color:#000;transform:scaleX(1.0054)">0.00</div>
<div class="t" style="left:1217.99px;top:374.78px;color:#000;transform:scaleX(1.0054)">-120.00</div>
<div class="t" style="left:1335.36px;top:374.78px;color:#000;transform:scaleX(1.0054)">120.00</div>
<div class="t" style="left:1503.96px;top:374.78px;color:#000;transform:scaleX(1.0054)">0.00</div>
<div class="t" style="left:1647.96px;top:374.78px;color:#000;transform:scaleX(1.0054)">0.00</div>
<div class="t" style="left:1801.36px;top:374.78px;color:#000;transform:scaleX(1.0054)">240.00</div>
<div class="t" style="left:1985.36px;top:374.78px;color:#000;transform:scaleX(1.0054)">221.33</div>
<div style="left:290px;top:424px;width:44px;height:20px;background:#000;"></div>
<div style="left:292px;top:426px;width:40px;height:16px;background:#ff00ff;"></div>
<div class="t" style="left:81.06px;top:414.78px;color:#000;transform:scaleX(0.9394);">X-5</div>
<div class="t" style="left:365.14px;top:414.78px;color:#000;transform:scaleX(0.8553);">SURVEYLINES</div>
<div class="t" style="left:516.76px;top:414.78px;color:#000;transform:scaleX(1.0054)">71032.08</div>
<div class="t" style="left:626.46px;top:414.78px;color:#000;transform:scaleX(1.0054)">441436.62</div>
<div class="t" style="left:789.96px;top:414.78px;color:#000;transform:scaleX(1.0054)">0.00</div>
<div class="t" style="left:850.76px;top:414.78px;color:#000;transform:scaleX(1.0054)">70873.59</div>
<div class="t" style="left:960.46px;top:414.78px;color:#000;transform:scaleX(1.0054)">441256.39</div>
<div class="t" style="left:1123.96px;top:414.78px;color:#000;transform:scaleX(1.0054)">0.00</div>
<div class="t" style="left:1217.99px;top:414.78px;color:#000;transform:scaleX(1.0054)">-120.00</div>
<div class="t" style="left:1335.36px;top:414.78px;color:#000;transform:scaleX(1.0054)">120.00</div>
<div class="t" style="left:1503.96px;top:414.78px;color:#000;transform:scaleX(1.0054)">0.00</div>
<div class="t" style="left:1647.96px;top:414.78px;color:#000;transform:scaleX(1.0054)">0.00</div>
<div class="t" style="left:1801.36px;top:414.78px;color:#000;transform:scaleX(1.0054)">240.00</div>
<div class="t" style="left:1985.36px;top:414.78px;color:#000;transform:scaleX(1.0054)">221.33</div>
<div style="left:290px;top:464px;width:44px;height:20px;background:#000;"></div>
<div style="left:292px;top:466px;width:40px;height:16px;background:#ff00ff;"></div>
<div class="t" style="left:81.03px;top:454.78px;color:#000;transform:scaleX(0.9688);">X-6</div>
<div class="t" style="left:365.14px;top:454.78px;color:#000;transform:scaleX(0.8553);">SURVEYLINES</div>
<div class="t" style="left:516.76px;top:454.78px;color:#000;transform:scaleX(1.0054)">71107.17</div>
<div class="t" style="left:626.46px;top:454.78px;color:#000;transform:scaleX(1.0054)">441370.58</div>
<div class="t" style="left:789.96px;top:454.78px;color:#000;transform:scaleX(1.0054)">0.00</div>
<div class="t" style="left:850.76px;top:454.78px;color:#000;transform:scaleX(1.0054)">70948.69</div>
<div class="t" style="left:960.46px;top:454.78px;color:#000;transform:scaleX(1.0054)">441190.35</div>
<div class="t" style="left:1123.96px;top:454.78px;color:#000;transform:scaleX(1.0054)">0.00</div>
<div class="t" style="left:1217.99px;top:454.78px;color:#000;transform:scaleX(1.0054)">-120.00</div>
<div class="t" style="left:1335.36px;top:454.78px;color:#000;transform:scaleX(1.0054)">120.00</div>
<div class="t" style="left:1503.96px;top:454.78px;color:#000;transform:scaleX(1.0054)">0.00</div>
<div class="t" style="left:1647.96px;top:454.78px;color:#000;transform:scaleX(1.0054)">0.00</div>
<div class="t" style="left:1801.36px;top:454.78px;color:#000;transform:scaleX(1.0054)">240.00</div>
<div class="t" style="left:1985.36px;top:454.78px;color:#000;transform:scaleX(1.0054)">221.33</div>
<div style="left:290px;top:504px;width:44px;height:20px;background:#000;"></div>
<div style="left:292px;top:506px;width:40px;height:16px;background:#ff00ff;"></div>
<div class="t" style="left:81.03px;top:494.78px;color:#000;transform:scaleX(0.9688);">X-7</div>
<div class="t" style="left:365.14px;top:494.78px;color:#000;transform:scaleX(0.8553);">SURVEYLINES</div>
<div class="t" style="left:516.76px;top:494.78px;color:#000;transform:scaleX(1.0054)">71182.27</div>
<div class="t" style="left:626.46px;top:494.78px;color:#000;transform:scaleX(1.0054)">441304.54</div>
<div class="t" style="left:789.96px;top:494.78px;color:#000;transform:scaleX(1.0054)">0.00</div>
<div class="t" style="left:850.76px;top:494.78px;color:#000;transform:scaleX(1.0054)">71023.78</div>
<div class="t" style="left:960.46px;top:494.78px;color:#000;transform:scaleX(1.0054)">441124.32</div>
<div class="t" style="left:1123.96px;top:494.78px;color:#000;transform:scaleX(1.0054)">0.00</div>
<div class="t" style="left:1217.99px;top:494.78px;color:#000;transform:scaleX(1.0054)">-120.00</div>
<div class="t" style="left:1335.36px;top:494.78px;color:#000;transform:scaleX(1.0054)">120.00</div>
<div class="t" style="left:1503.96px;top:494.78px;color:#000;transform:scaleX(1.0054)">0.00</div>
<div class="t" style="left:1647.96px;top:494.78px;color:#000;transform:scaleX(1.0054)">0.00</div>
<div class="t" style="left:1801.36px;top:494.78px;color:#000;transform:scaleX(1.0054)">240.00</div>
<div class="t" style="left:1985.36px;top:494.78px;color:#000;transform:scaleX(1.0054)">221.33</div>
<div style="left:290px;top:544px;width:44px;height:20px;background:#000;"></div>
<div style="left:292px;top:546px;width:40px;height:16px;background:#ff00ff;"></div>
<div class="t" style="left:81.03px;top:534.78px;color:#000;transform:scaleX(0.9688);">X-8</div>
<div class="t" style="left:365.14px;top:534.78px;color:#000;transform:scaleX(0.8553);">SURVEYLINES</div>
<div class="t" style="left:516.76px;top:534.78px;color:#000;transform:scaleX(1.0054)">71257.36</div>
<div class="t" style="left:626.46px;top:534.78px;color:#000;transform:scaleX(1.0054)">441238.51</div>
<div class="t" style="left:789.96px;top:534.78px;color:#000;transform:scaleX(1.0054)">0.00</div>
<div class="t" style="left:850.76px;top:534.78px;color:#000;transform:scaleX(1.0054)">71098.88</div>
<div class="t" style="left:960.46px;top:534.78px;color:#000;transform:scaleX(1.0054)">441058.28</div>
<div class="t" style="left:1123.96px;top:534.78px;color:#000;transform:scaleX(1.0054)">0.00</div>
<div class="t" style="left:1217.99px;top:534.78px;color:#000;transform:scaleX(1.0054)">-120.00</div>
<div class="t" style="left:1335.36px;top:534.78px;color:#000;transform:scaleX(1.0054)">120.00</div>
<div class="t" style="left:1503.96px;top:534.78px;color:#000;transform:scaleX(1.0054)">0.00</div>
<div class="t" style="left:1647.96px;top:534.78px;color:#000;transform:scaleX(1.0054)">0.00</div>
<div class="t" style="left:1801.36px;top:534.78px;color:#000;transform:scaleX(1.0054)">240.00</div>
<div class="t" style="left:1985.36px;top:534.78px;color:#000;transform:scaleX(1.0054)">221.33</div>
<div style="left:290px;top:584px;width:44px;height:20px;background:#000;"></div>
<div style="left:292px;top:586px;width:40px;height:16px;background:#ff00ff;"></div>
<div class="t" style="left:81.03px;top:574.78px;color:#000;transform:scaleX(0.9688);">X-9</div>
<div class="t" style="left:365.14px;top:574.78px;color:#000;transform:scaleX(0.8553);">SURVEYLINES</div>
<div class="t" style="left:516.76px;top:574.78px;color:#000;transform:scaleX(1.0054)">71332.46</div>
<div class="t" style="left:626.46px;top:574.78px;color:#000;transform:scaleX(1.0054)">441172.47</div>
<div class="t" style="left:789.96px;top:574.78px;color:#000;transform:scaleX(1.0054)">0.00</div>
<div class="t" style="left:850.76px;top:574.78px;color:#000;transform:scaleX(1.0054)">71173.97</div>
<div class="t" style="left:960.46px;top:574.78px;color:#000;transform:scaleX(1.0054)">440992.24</div>
<div class="t" style="left:1123.96px;top:574.78px;color:#000;transform:scaleX(1.0054)">0.00</div>
<div class="t" style="left:1217.99px;top:574.78px;color:#000;transform:scaleX(1.0054)">-120.00</div>
<div class="t" style="left:1335.36px;top:574.78px;color:#000;transform:scaleX(1.0054)">120.00</div>
<div class="t" style="left:1503.96px;top:574.78px;color:#000;transform:scaleX(1.0054)">0.00</div>
<div class="t" style="left:1647.96px;top:574.78px;color:#000;transform:scaleX(1.0054)">0.00</div>
<div class="t" style="left:1801.36px;top:574.78px;color:#000;transform:scaleX(1.0054)">240.00</div>
<div class="t" style="left:1985.36px;top:574.78px;color:#000;transform:scaleX(1.0054)">221.33</div>
<svg style="position:absolute;left:0;top:0" width="80" height="260"><rect x="56" y="222" width="2" height="2" fill="#111111"/><rect x="58" y="222" width="2" height="2" fill="#111111"/><rect x="60" y="222" width="2" height="2" fill="#111111"/><rect x="56" y="224" width="2" height="2" fill="#111111"/><rect x="58" y="224" width="2" height="2" fill="#ffffff"/><rect x="60" y="224" width="2" height="2" fill="#ffffff"/><rect x="62" y="224" width="2" height="2" fill="#111111"/><rect x="54" y="226" width="2" height="2" fill="#111111"/><rect x="56" y="226" width="2" height="2" fill="#111111"/><rect x="58" y="226" width="2" height="2" fill="#ffffff"/><rect x="60" y="226" width="2" height="2" fill="#8a8a8a"/><rect x="62" y="226" width="2" height="2" fill="#111111"/><rect x="54" y="228" width="2" height="2" fill="#111111"/><rect x="56" y="228" width="2" height="2" fill="#111111"/><rect x="58" y="228" width="2" height="2" fill="#8a8a8a"/><rect x="60" y="228" width="2" height="2" fill="#111111"/><rect x="62" y="228" width="2" height="2" fill="#8a8a8a"/><rect x="52" y="230" width="2" height="2" fill="#111111"/><rect x="54" y="230" width="2" height="2" fill="#ffffff"/><rect x="56" y="230" width="2" height="2" fill="#ffffff"/><rect x="58" y="230" width="2" height="2" fill="#8a8a8a"/><rect x="60" y="230" width="2" height="2" fill="#111111"/><rect x="52" y="232" width="2" height="2" fill="#111111"/><rect x="54" y="232" width="2" height="2" fill="#ffffff"/><rect x="56" y="232" width="2" height="2" fill="#ffffff"/><rect x="58" y="232" width="2" height="2" fill="#111111"/><rect x="50" y="234" width="2" height="2" fill="#8a8a8a"/><rect x="52" y="234" width="2" height="2" fill="#111111"/><rect x="54" y="234" width="2" height="2" fill="#ffffff"/><rect x="56" y="234" width="2" height="2" fill="#ffffff"/><rect x="58" y="234" width="2" height="2" fill="#111111"/><rect x="50" y="236" width="2" height="2" fill="#111111"/><rect x="52" y="236" width="2" height="2" fill="#ffffff"/><rect x="54" y="236" width="2" height="2" fill="#ffffff"/><rect x="56" y="236" width="2" height="2" fill="#111111"/><rect x="50" y="238" width="2" height="2" fill="#111111"/><rect x="52" y="238" width="2" height="2" fill="#ffffff"/><rect x="54" y="238" width="2" height="2" fill="#8a8a8a"/><rect x="56" y="238" width="2" height="2" fill="#111111"/><rect x="50" y="240" width="2" height="2" fill="#111111"/><rect x="52" y="240" width="2" height="2" fill="#ffffff"/><rect x="54" y="240" width="2" height="2" fill="#8a8a8a"/><rect x="56" y="240" width="2" height="2" fill="#8a8a8a"/><rect x="50" y="242" width="2" height="2" fill="#111111"/><rect x="52" y="242" width="2" height="2" fill="#111111"/><rect x="54" y="242" width="2" height="2" fill="#111111"/><rect x="58" y="242" width="2" height="2" fill="#111111"/><rect x="62" y="242" width="2" height="2" fill="#111111"/></svg>
<div style="left:40px;top:686px;width:150px;height:46px;box-sizing:border-box;border:2px solid #a9b7ca;border-radius:4px;background:linear-gradient(#e6eef8,#d6e1ee);box-shadow:inset 0 0 0 2px #fff"></div>
<div style="left:202px;top:686px;width:150px;height:46px;box-sizing:border-box;border:2px solid #a9b7ca;border-radius:4px;background:linear-gradient(#e6eef8,#d6e1ee)"></div>
<div class="t" style="left:99.07px;top:690.78px;color:#1d3964;transform:scaleX(0.9333);">OK</div>
<div class="t" style="left:242.05px;top:690.78px;color:#1d3964;transform:scaleX(0.9545);">Cancel</div>
<div class="t" style="left:2026.15px;top:700.78px;color:#1d3964;transform:scaleX(0.9259);">10 Lines</div>
<div style="left:2106px;top:750px;width:4px;height:4px;background:#8fa5c2;"></div>
<div style="left:2114px;top:750px;width:4px;height:4px;background:#8fa5c2;"></div>
<div style="left:2122px;top:750px;width:4px;height:4px;background:#8fa5c2;"></div>
<div style="left:2114px;top:742px;width:4px;height:4px;background:#8fa5c2;"></div>
<div style="left:2122px;top:742px;width:4px;height:4px;background:#8fa5c2;"></div>
<div style="left:2122px;top:734px;width:4px;height:4px;background:#8fa5c2;"></div>
<svg style="position:absolute;left:0;top:0" width="2144" height="772" viewBox="0 0 2144 772">
<defs>
<linearGradient id="gplus" x1="0" y1="0" x2="0" y2="1"><stop offset="0" stop-color="#a6ee7c"/><stop offset="1" stop-color="#5cc43a"/></linearGradient>
<linearGradient id="gx" x1="0" y1="0" x2="0" y2="1"><stop offset="0" stop-color="#ff8a4a"/><stop offset="1" stop-color="#f0501c"/></linearGradient>
</defs>
<!-- plus -->
<path d="M40 74H52V82H60V94H52V102H40V94H32V82H40Z" fill="#239c1f"/>
<path d="M42 76H50V84H58V92H50V100H42V92H34V84H42Z" fill="url(#gplus)"/>
<!-- delete X -->
<path d="M144 76L152 76L155 83L160 76L168 76L168 80L161 89L167 95L166 101L158 101L154.5 95L149 101L142 101L140 97L146 89L143.5 79Z" fill="url(#gx)" stroke="#d2311b" stroke-width="1.6" stroke-linejoin="round"/>
<!-- copy -->
<path d="M275 75H288L293 80V97H275Z" fill="#f4f0fa" stroke="#7a5cb4" stroke-width="2"/>
<rect x="285" y="85" width="5" height="9" fill="#b6a6dc"/>
<path d="M286 75V81H292" fill="none" stroke="#9c88c8" stroke-width="2"/>
<path d="M267 79H280L285 84V101H267Z" fill="#ffffff" stroke="#6e7da3" stroke-width="2"/>
<path d="M279 79V85H285" fill="#dfe3f0" stroke="#6e7da3" stroke-width="2"/>
<rect x="270" y="86" width="12" height="2" fill="#8d97b8"/>
<rect x="270" y="90" width="12" height="8" fill="#b7c0de"/>
<!-- interpolate (disabled) -->
<path d="M537 90L556 73" stroke="#d0d0d2" stroke-width="2.6"/>
<path d="M538 95L561 84" stroke="#adadb0" stroke-width="2.6"/>
<path d="M536 99H564" stroke="#cfcfd0" stroke-width="2.4"/>
</svg>

</body></html>
